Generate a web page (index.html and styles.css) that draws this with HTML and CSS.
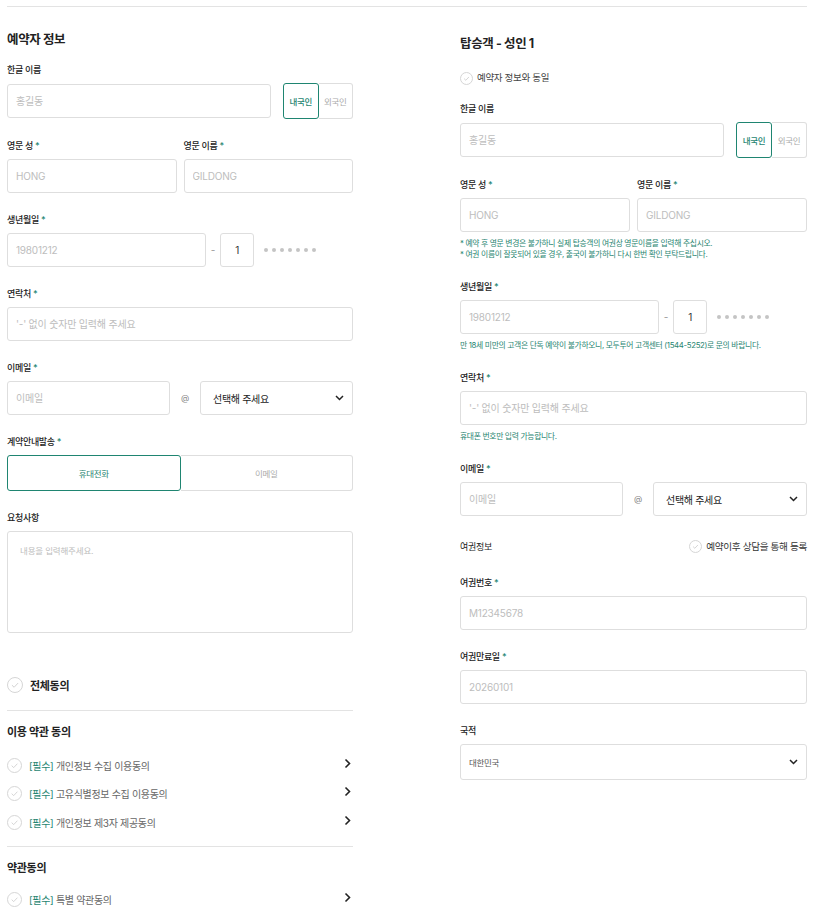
FILE: index.html
```html
<!DOCTYPE html>
<html lang="ko">
<head>
  <meta charset="UTF-8" />
  <title>예약 정보 입력</title>
  <meta name="viewport" content="width=device-width, initial-scale=1.0" />
  <link rel="stylesheet" href="styles.css">
</head>
<body>
<div class="page">
  <div class="columns">

    <!-- 예약자 정보 -->
    <section class="col left">
      <h2>예약자 정보</h2>

      <div class="field">
        <label>한글 이름</label>
        <div class="name-row">
          <input type="text" placeholder="홍길동" />
          <div class="toggle">
            <span class="on">내국인</span>
            <span>외국인</span>
          </div>
        </div>
      </div>

      <div class="pair">
        <div class="field">
          <label>영문 성 <em>*</em></label>
          <input type="text" placeholder="HONG" />
        </div>
        <div class="field">
          <label>영문 이름 <em>*</em></label>
          <input type="text" placeholder="GILDONG" />
        </div>
      </div>

      <div class="field">
        <label>생년월일 <em>*</em></label>
        <div class="birth-row">
          <input type="text" placeholder="19801212" />
          <span class="dash">-</span>
          <div class="gender">1</div>
          <div class="dots"><i></i><i></i><i></i><i></i><i></i><i></i><i></i></div>
        </div>
      </div>

      <div class="field">
        <label>연락처 <em>*</em></label>
        <input type="text" placeholder="'-' 없이 숫자만 입력해 주세요" />
      </div>

      <div class="field">
        <label>이메일 <em>*</em></label>
        <div class="mail-row">
          <input type="text" placeholder="이메일" />
          <span class="at">@</span>
          <div class="select">
            <span>선택해 주세요</span>
            <svg width="9" height="6" viewBox="0 0 9 6"><polyline points="1,1 4.5,4.5 8,1" fill="none" stroke="#222" stroke-width="1.5"/></svg>
          </div>
        </div>
      </div>

      <div class="field">
        <label>계약안내발송 <em>*</em></label>
        <div class="send">
          <span class="on">휴대전화</span>
          <span>이메일</span>
        </div>
      </div>

      <div class="field">
        <label>요청사항</label>
        <textarea placeholder="내용을 입력해주세요."></textarea>
      </div>

      <div class="agree-all">
        <span class="check big"><svg viewBox="0 0 16 16"><polyline points="4.5,8.2 7,10.6 11.5,5.8" fill="none" stroke="#ccc" stroke-width="1"/></svg></span>
        전체동의
      </div>

      <div class="terms">
        <h3>이용 약관 동의</h3>
        <div class="term">
          <span class="check"><svg viewBox="0 0 16 16"><polyline points="4.5,8.2 7,10.6 11.5,5.8" fill="none" stroke="#ccc" stroke-width="1"/></svg></span>
          <p><b>[필수]</b> 개인정보 수집 이용동의</p>
          <svg class="arrow" width="7" height="11" viewBox="0 0 7 11"><polyline points="1.5,1.5 5.5,5.5 1.5,9.5" fill="none" stroke="#222" stroke-width="1.6"/></svg>
        </div>
        <div class="term">
          <span class="check"><svg viewBox="0 0 16 16"><polyline points="4.5,8.2 7,10.6 11.5,5.8" fill="none" stroke="#ccc" stroke-width="1"/></svg></span>
          <p><b>[필수]</b> 고유식별정보 수집 이용동의</p>
          <svg class="arrow" width="7" height="11" viewBox="0 0 7 11"><polyline points="1.5,1.5 5.5,5.5 1.5,9.5" fill="none" stroke="#222" stroke-width="1.6"/></svg>
        </div>
        <div class="term">
          <span class="check"><svg viewBox="0 0 16 16"><polyline points="4.5,8.2 7,10.6 11.5,5.8" fill="none" stroke="#ccc" stroke-width="1"/></svg></span>
          <p><b>[필수]</b> 개인정보 제3자 제공동의</p>
          <svg class="arrow" width="7" height="11" viewBox="0 0 7 11"><polyline points="1.5,1.5 5.5,5.5 1.5,9.5" fill="none" stroke="#222" stroke-width="1.6"/></svg>
        </div>
      </div>

      <div class="terms last">
        <h3>약관동의</h3>
        <div class="term">
          <span class="check"><svg viewBox="0 0 16 16"><polyline points="4.5,8.2 7,10.6 11.5,5.8" fill="none" stroke="#ccc" stroke-width="1"/></svg></span>
          <p><b>[필수]</b> 특별 약관동의</p>
          <svg class="arrow" width="7" height="11" viewBox="0 0 7 11"><polyline points="1.5,1.5 5.5,5.5 1.5,9.5" fill="none" stroke="#222" stroke-width="1.6"/></svg>
        </div>
      </div>
    </section>

    <!-- 탑승객 정보 -->
    <section class="col right">
      <h2>탑승객 - 성인 1</h2>

      <div class="same">
        <span class="check small"><svg viewBox="0 0 16 16"><polyline points="4.5,8.2 7,10.6 11.5,5.8" fill="none" stroke="#ccc" stroke-width="1.2"/></svg></span>
        예약자 정보와 동일
      </div>

      <div class="field">
        <label>한글 이름</label>
        <div class="name-row">
          <input type="text" placeholder="홍길동" />
          <div class="toggle">
            <span class="on">내국인</span>
            <span>외국인</span>
          </div>
        </div>
      </div>

      <div class="field">
        <div class="pair">
          <div>
            <label>영문 성 <em>*</em></label>
            <input type="text" placeholder="HONG" />
          </div>
          <div>
            <label>영문 이름 <em>*</em></label>
            <input type="text" placeholder="GILDONG" />
          </div>
        </div>
        <p class="note">* 예약 후 영문 변경은 불가하니 실제 탑승객의 여권상 영문이름을 입력해 주십시오.<br>* 여권 이름이 잘못되어 있을 경우, 출국이 불가하니 다시 한번 확인 부탁드립니다.</p>
      </div>

      <div class="field">
        <label>생년월일 <em>*</em></label>
        <div class="birth-row">
          <input type="text" placeholder="19801212" />
          <span class="dash">-</span>
          <div class="gender">1</div>
          <div class="dots"><i></i><i></i><i></i><i></i><i></i><i></i><i></i></div>
        </div>
        <p class="note">만 18세 미만의 고객은 단독 예약이 불가하오니, 모두투어 고객센터 (1544-5252)로 문의 바랍니다.</p>
      </div>

      <div class="field">
        <label>연락처 <em>*</em></label>
        <input type="text" placeholder="'-' 없이 숫자만 입력해 주세요" />
        <p class="note">휴대폰 번호만 입력 가능합니다.</p>
      </div>

      <div class="field">
        <label>이메일 <em>*</em></label>
        <div class="mail-row">
          <input type="text" placeholder="이메일" />
          <span class="at">@</span>
          <div class="select">
            <span>선택해 주세요</span>
            <svg width="9" height="6" viewBox="0 0 9 6"><polyline points="1,1 4.5,4.5 8,1" fill="none" stroke="#222" stroke-width="1.5"/></svg>
          </div>
        </div>
      </div>

      <div class="passport-head">
        <span>여권정보</span>
        <span class="later">
          <span class="check small"><svg viewBox="0 0 16 16"><polyline points="4.5,8.2 7,10.6 11.5,5.8" fill="none" stroke="#ccc" stroke-width="1.2"/></svg></span>
          예약이후 상담을 통해 등록
        </span>
      </div>

      <div class="field">
        <label>여권번호 <em>*</em></label>
        <input type="text" placeholder="M12345678" />
      </div>

      <div class="field">
        <label>여권만료일 <em>*</em></label>
        <input type="text" placeholder="20260101" />
      </div>

      <div class="field">
        <label>국적</label>
        <div class="select tall">
          <span class="soft">대한민국</span>
          <svg width="9" height="6" viewBox="0 0 9 6"><polyline points="1,1 4.5,4.5 8,1" fill="none" stroke="#222" stroke-width="1.5"/></svg>
        </div>
      </div>
    </section>

  </div>
</div>
</body>
</html>
```

FILE: styles.css
```css
* {
  margin: 0;
  padding: 0;
  box-sizing: border-box;
}

body {
  background: #fff;
  color: #222;
  font-family: Inter, "Noto Sans CJK KR", sans-serif;
  letter-spacing: -0.02em;
}

.page {
  padding: 6px 10px 0 7px;
}

.columns {
  border-top: 1px solid #e3e3e3;
  display: grid;
  grid-template-columns: 346px 347px;
  justify-content: space-between;
}

h2 {
  font-size: 12.5px;
  font-weight: 700;
  line-height: 18px;
  letter-spacing: -0.03em;
}

.left h2 {
  margin: 24px 0 14px;
}

.right h2 {
  margin: 28px 0 17px;
}

.field {
  margin-bottom: 20px;
}

label {
  display: block;
  font-size: 9px;
  font-weight: 500;
  line-height: 14px;
  margin-bottom: 6px;
  color: #222;
}

label em {
  font-style: normal;
  color: #1f8571;
}

input,
textarea {
  display: block;
  width: 100%;
  height: 34px;
  border: 1px solid #dedede;
  border-radius: 3px;
  padding: 0 8px;
  font-family: inherit;
  font-size: 10px;
  letter-spacing: -0.02em;
  color: #222;
  outline: none;
}

input::placeholder,
textarea::placeholder {
  color: #bdbdbd;
}

textarea {
  height: 102px;
  padding: 12px;
  font-size: 8.5px;
  resize: none;
}

/* name + nationality */
.name-row {
  display: flex;
  align-items: center;
  gap: 12px;
}

.name-row input {
  flex: 0 0 264px;
}

.toggle {
  flex: 1;
  height: 36px;
  display: flex;
}

.toggle span {
  flex: 1;
  display: flex;
  align-items: center;
  justify-content: center;
  font-size: 8.5px;
  color: #aaa;
  border: 1px solid #dedede;
  border-left: none;
  border-radius: 0 3px 3px 0;
}

.toggle span.on {
  color: #1f8571;
  font-weight: 500;
  border: 1px solid #1f8571;
  border-radius: 3px;
}

.pair {
  display: grid;
  grid-template-columns: 1fr 1fr;
  gap: 7px;
}

/* birth */
.birth-row {
  display: flex;
  align-items: center;
}

.birth-row input {
  flex: 0 0 199px;
}

.dash {
  width: 14px;
  text-align: center;
  font-size: 10px;
  color: #999;
}

.gender {
  width: 34px;
  height: 34px;
  border: 1px solid #dedede;
  border-radius: 3px;
  display: flex;
  align-items: center;
  justify-content: center;
  font-size: 10px;
  color: #333;
}

.dots {
  display: flex;
  gap: 4px;
  margin-left: 10px;
}

.dots i {
  width: 4px;
  height: 4px;
  border-radius: 50%;
  background: #c4c4c4;
}

/* email */
.mail-row {
  display: flex;
  align-items: center;
}

.mail-row input {
  flex: 0 0 163px;
}

.at {
  width: 30px;
  text-align: center;
  font-size: 8.5px;
  color: #888;
}

.select {
  flex: 1;
  height: 34px;
  border: 1px solid #dedede;
  border-radius: 3px;
  padding: 0 8px 0 12px;
  display: flex;
  align-items: center;
  justify-content: space-between;
  font-size: 10px;
  color: #222;
}

.select.tall {
  height: 36px;
  padding-left: 8px;
}

.select .soft {
  font-size: 8.5px;
  color: #555;
}

/* contact send */
.send {
  display: flex;
  height: 36px;
}

.send span {
  flex: 1;
  display: flex;
  align-items: center;
  justify-content: center;
  font-size: 8.5px;
  color: #aaa;
  border: 1px solid #dedede;
  border-left: none;
  border-radius: 0 3px 3px 0;
}

.send span.on {
  color: #1f8571;
  border: 1px solid #1f8571;
  border-radius: 3px;
}

/* check circles */
.check {
  width: 15px;
  height: 15px;
  flex: 0 0 15px;
  border: 1px solid #d6d6d6;
  border-radius: 50%;
  display: inline-flex;
}

.check svg {
  width: 100%;
  height: 100%;
}

.check.big {
  width: 16px;
  height: 16px;
  flex-basis: 16px;
}

.check.small {
  width: 13px;
  height: 13px;
  flex-basis: 13px;
}

.agree-all {
  margin-top: 42px;
  padding-bottom: 16px;
  border-bottom: 1px solid #e3e3e3;
  display: flex;
  align-items: center;
  gap: 7px;
  height: 36px;
  font-size: 11px;
  font-weight: 700;
}

.terms {
  padding: 12px 0 9px;
  border-bottom: 1px solid #e3e3e3;
}

.terms.last {
  border-bottom: none;
}

h3 {
  font-size: 11px;
  font-weight: 600;
  line-height: 18px;
  margin-bottom: 10px;
}

.terms.last h3 {
  margin-bottom: 9px;
}

.term {
  height: 28.5px;
  display: flex;
  align-items: center;
  gap: 7px;
}

.term p {
  flex: 1;
  font-size: 10px;
  color: #666;
}

.term b {
  font-weight: 400;
  color: #1f8571;
}

.term .arrow {
  margin: 0 2px 4px 0;
}

/* passenger */
.same {
  display: flex;
  align-items: center;
  gap: 4px;
  font-size: 9.5px;
  color: #444;
  line-height: 16px;
  margin-bottom: 16px;
}

.note {
  margin-top: 6px;
  font-size: 7.8px;
  line-height: 11px;
  color: #1f8571;
}

.passport-head {
  display: flex;
  justify-content: space-between;
  align-items: center;
  padding-top: 2px;
  height: 18px;
  margin-bottom: 22px;
  font-size: 9px;
  color: #222;
}

.later {
  display: flex;
  align-items: center;
  gap: 4px;
  font-size: 9.6px;
  color: #333;
}
```
